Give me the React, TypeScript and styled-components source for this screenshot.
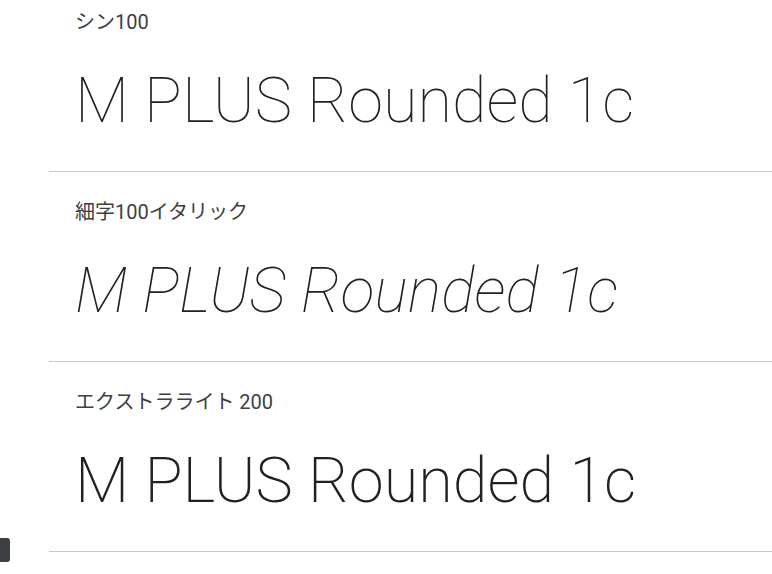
import styled, { createGlobalStyle } from 'styled-components';

const Global = createGlobalStyle`
  html, body {
    margin: 0;
    background: #fff;
    overflow: hidden;
  }
  body {
    font-family: Roboto, "Noto Sans CJK JP", sans-serif;
  }
`

const Page = styled.div`
  height: 574px;
  overflow: hidden;
`

const List = styled.div`
  margin-left: 49px;
`

const Section = styled.section<{ $first?: boolean }>`
  display: flex;
  flex-direction: column;
  padding: ${p => (p.$first ? '8px' : '26px')} 0 26px 26px;
  border-bottom: 1px solid #c8c8c8;
`

const Label = styled.div`
  font-family: Roboto, "Noto Sans CJK JP", sans-serif;
  font-size: 20px;
  line-height: 28px;
  color: #3c4043;
  margin-bottom: 21px;
`

const Sample = styled.div<{ $italic?: boolean; $weight: number }>`
  font-family: Roboto, sans-serif;
  font-size: 63px;
  line-height: 88px;
  font-weight: ${p => p.$weight};
  font-style: ${p => (p.$italic ? 'italic' : 'normal')};
  color: #202124;
  white-space: nowrap;
`

const SideTab = styled.div`
  position: fixed;
  left: 0;
  top: 538px;
  width: 10px;
  height: 24px;
  background: #3c4043;
  border-radius: 0 3px 3px 0;
`

const styles = [
  { label: 'シン100', weight: 100, italic: false },
  { label: '細字100イタリック', weight: 100, italic: true },
  { label: 'エクストラライト 200', weight: 200, italic: false },
]

export default function App() {
  return (
    <Page>
      <Global />
      <List>
        {styles.map((s, i) => (
          <Section key={s.label} $first={i === 0}>
            <Label>{s.label}</Label>
            <Sample $weight={s.weight} $italic={s.italic}>M PLUS Rounded 1c</Sample>
          </Section>
        ))}
      </List>
      <SideTab />
    </Page>
  );
}
